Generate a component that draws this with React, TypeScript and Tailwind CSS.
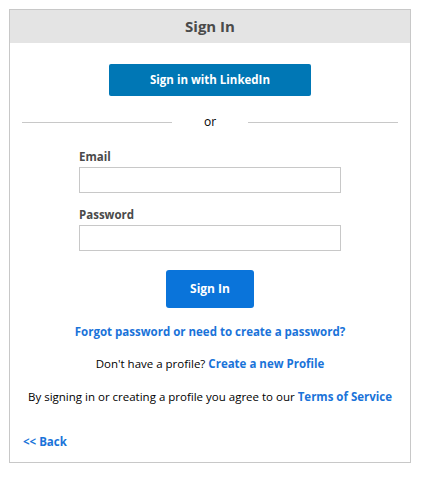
import React from "react";

export default function App() {
  return (
    <div className="w-[424px] h-[480px] bg-white pt-[9px] px-[9px]" style={{ fontFamily: '"Open Sans", sans-serif' }}>
      <div className="w-[402px] h-[454px] border border-[#c8c8c8] flex flex-col">
        <div className="h-[33px] bg-[#e4e4e4] flex items-center justify-center text-[15px] font-bold text-[#4a4a4a]">Sign In</div>
        <div className="flex justify-center mt-[21px]">
          <button className="w-[202px] h-[32px] bg-[#0077b5] rounded-[2px] text-white text-[11.5px] font-bold">Sign in with LinkedIn</button>
        </div>
        <div className="flex items-center mt-[17px] px-[12px]">
          <div className="h-px bg-[#c8c8c8] w-[150px]" />
          <div className="flex-1 text-center text-[12px] text-black">or</div>
          <div className="h-px bg-[#c8c8c8] w-[150px]" />
        </div>
        <div className="flex flex-col px-[69px] mt-[18px]">
          <label className="text-[11.5px] font-bold text-[#4a4a4a] leading-[16px]">Email</label>
          <div className="mt-[2px] h-[26px] border border-[#c8c8c8]" />
          <label className="mt-[14px] text-[11.5px] font-bold text-[#4a4a4a] leading-[16px]">Password</label>
          <div className="mt-[2px] h-[26px] border border-[#c8c8c8]" />
        </div>
        <div className="flex justify-center mt-[19px]">
          <button className="w-[88px] h-[38px] bg-[#0a74da] rounded-[3px] text-white text-[12px] font-bold">Sign In</button>
        </div>
        <div className="mt-[16px] text-center text-[11.5px] leading-[16px] font-bold text-[#1a73d9]">Forgot password or need to create a password?</div>
        <div className="mt-[16px] text-center text-[11.5px] leading-[16px] text-black">
          Don't have a profile? <span className="font-bold text-[#1a73d9]">Create a new Profile</span>
        </div>
        <div className="mt-[17px] text-center text-[11.5px] leading-[16px] text-black whitespace-nowrap">
          By signing in or creating a profile you agree to our <span className="font-bold text-[#1a73d9]">Terms of Service</span>
        </div>
        <div className="mt-[29px] px-[13px] text-[11.5px] leading-[16px] font-bold text-[#1a73d9]">&lt;&lt; Back</div>
      </div>
    </div>
  );
}
